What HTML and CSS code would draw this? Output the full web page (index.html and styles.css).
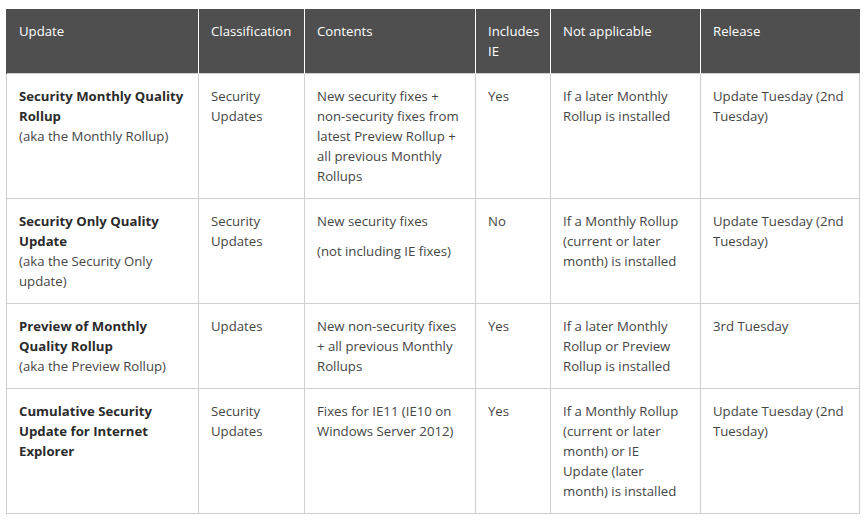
FILE: index.html
```html
<!DOCTYPE html>
<html>
<head>
<meta charset="utf-8">
<link rel="stylesheet" href="styles.css">
</head>
<body>
<div class="wrap">
<table class="updates">
  <colgroup>
    <col class="c1"><col class="c2"><col class="c3"><col class="c4"><col class="c5"><col class="c6">
  </colgroup>
  <thead>
    <tr>
      <th>Update</th>
      <th>Classification</th>
      <th>Contents</th>
      <th>Includes IE</th>
      <th>Not applicable</th>
      <th>Release</th>
    </tr>
  </thead>
  <tbody>
    <tr>
      <td><p><strong>Security Monthly Quality Rollup</strong><br>(aka the Monthly Rollup)</p></td>
      <td><p>Security Updates</p></td>
      <td><p>New security fixes + non-security fixes from latest Preview Rollup + all previous Monthly Rollups</p></td>
      <td><p>Yes</p></td>
      <td class="na"><p>If a later Monthly Rollup is installed</p></td>
      <td><p>Update Tuesday (2nd Tuesday)</p></td>
    </tr>
    <tr>
      <td><p><strong>Security Only Quality Update</strong><br>(aka the Security Only update)</p></td>
      <td><p>Security Updates</p></td>
      <td><p>New security fixes</p><p>(not including IE fixes)</p></td>
      <td><p>No</p></td>
      <td class="na"><p>If a Monthly Rollup (current or later month) is installed</p></td>
      <td><p>Update Tuesday (2nd Tuesday)</p></td>
    </tr>
    <tr>
      <td><p><strong>Preview of Monthly Quality Rollup</strong><br>(aka the Preview Rollup)</p></td>
      <td><p>Updates</p></td>
      <td><p>New non-security fixes + all previous Monthly Rollups</p></td>
      <td><p>Yes</p></td>
      <td class="na"><p>If a later Monthly Rollup or Preview Rollup is installed</p></td>
      <td><p>3rd Tuesday</p></td>
    </tr>
    <tr>
      <td><p><strong>Cumulative Security Update for Internet Explorer</strong></p></td>
      <td><p>Security Updates</p></td>
      <td><p>Fixes for IE11 (IE10 on Windows Server 2012)</p></td>
      <td><p>Yes</p></td>
      <td class="na"><p>If a Monthly Rollup (current or later month) or IE Update (later month) is installed</p></td>
      <td><p>Update Tuesday (2nd Tuesday)</p></td>
    </tr>
  </tbody>
</table>
</div>
</body>
</html>
```

FILE: styles.css
```css
html, body {
  margin: 0;
  padding: 0;
  background: #ffffff;
}
.wrap {
  padding: 9px 0 0 6px;
}
.updates {
  border-collapse: collapse;
  table-layout: fixed;
  width: 853px;
  font-family: "Open Sans", "Noto Sans", sans-serif;
  font-size: 13.2px;
  line-height: 20px;
  color: #454545;
}
.c1 { width: 192px; }
.c2 { width: 106px; }
.c3 { width: 171px; }
.c4 { width: 75px; }
.c5 { width: 150px; }
.c6 { width: 159px; }
.updates th {
  background: #4f4f4f;
  color: #ffffff;
  font-weight: normal;
  text-align: left;
  vertical-align: top;
  padding: 12px 11px 12px 12px;
  height: 40px;
  border-left: 1px solid #ffffff;
}
.updates th:first-child {
  border-left: 1px solid #4f4f4f;
}
.updates td {
  vertical-align: top;
  padding: 12px 11px 12px 12px;
  border: 1px solid #cfcfcf;
}
.updates td.na {
  padding-right: 16px;
}
.updates td p {
  margin: 0;
}
.updates td p + p {
  margin-top: 10px;
}
.updates strong {
  font-weight: bold;
  color: #2b2b2b;
}
```
